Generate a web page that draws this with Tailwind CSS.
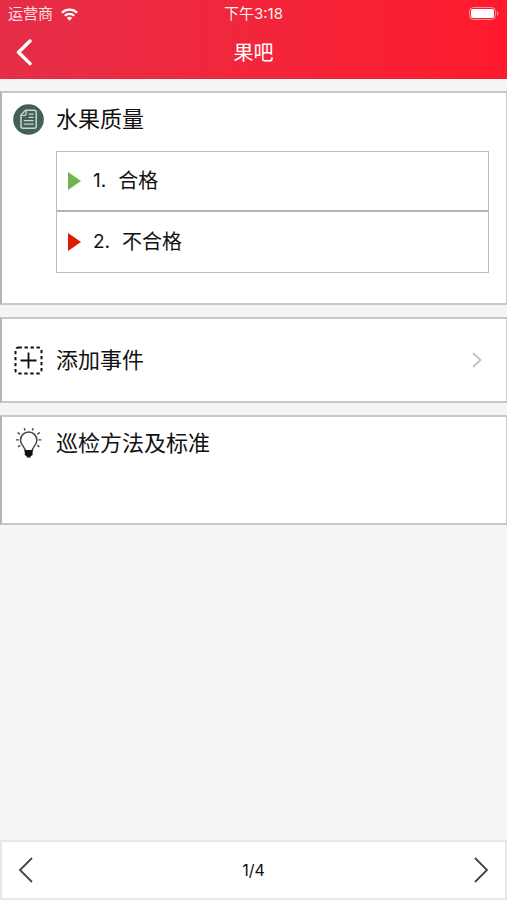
<!DOCTYPE html>
<html lang="zh-CN">
<head>
<meta charset="utf-8">
<meta name="viewport" content="width=device-width, initial-scale=1">
<title>果吧</title>
<script src="https://cdn.jsdelivr.net/npm/@tailwindcss/browser@4"></script>
</head>
<body class="flex min-h-screen flex-col bg-[#f5f5f5] font-['Inter','Noto_Sans_CJK_SC',sans-serif] text-[#111]">
<header class="bg-linear-to-r from-[#e52d47] to-[#ff1a2c] text-white">
  <div class="grid h-7 grid-cols-3 items-center px-2 text-[15px] leading-5">
    <div class="flex items-center gap-2 text-white/85">
      <span>运营商</span>
      <svg class="h-[13px] w-[17px]" viewBox="0 0 17 13" fill="none" stroke="#fff" stroke-width="2.3" aria-hidden="true">
        <path d="M.9 4.8a10.8 10.8 0 0 1 15.2 0M3.8 7.8a6.7 6.7 0 0 1 9.4 0"/>
        <path d="M8.5 12.8 5.8 10.1a3.8 3.8 0 0 1 5.4 0z" fill="#fff" stroke="none"/>
      </svg>
    </div>
    <div class="text-center text-white/95">下午3:18</div>
    <svg class="h-4 w-8 justify-self-end" viewBox="0 0 32 16" aria-hidden="true">
      <rect x="2.5" y="1.5" width="26" height="12" rx="4" fill="none" stroke="#fff" stroke-opacity=".5"/>
      <rect x="4" y="3" width="23" height="9" rx="2" fill="#fff"/>
      <path d="M30 5.3c1.9.6 1.9 3.8 0 4.4z" fill="#fff" fill-opacity=".5"/>
    </svg>
  </div>
  <div class="grid h-[51px] grid-cols-[48px_1fr_48px] items-center pb-0.5">
    <button type="button" aria-label="返回" class="flex h-11 items-center pl-4">
      <svg class="h-7 w-4" viewBox="0 0 16 28" fill="none" stroke="#fff" stroke-width="3.4" stroke-linecap="round" stroke-linejoin="round" aria-hidden="true"><path d="M14 2 2.5 13.3 14 24.6"/></svg>
    </button>
    <h1 class="text-center text-[20px] leading-7">果吧</h1>
  </div>
</header>

<main class="flex flex-1 flex-col gap-3 py-3">
  <section class="border-2 border-r border-[#c8c8c8] border-l-[#b4b4b4] bg-white pr-[17px] pb-[30px] pl-[11px]">
    <div class="flex h-[58px] items-center gap-3 pb-1.5">
      <svg class="size-[31px]" viewBox="0 0 31 31" fill="none" aria-hidden="true">
        <circle cx="15.5" cy="15.5" r="15.3" fill="#466059"/>
        <path d="M12.6 6.3h8.6a2 2 0 0 1 2 2v13.9a2 2 0 0 1-2 2H10a2 2 0 0 1-2-2V11z" stroke="#c3d9d1" stroke-width="1.5" stroke-linejoin="round"/>
        <path d="M13.2 6.5v3a2 2 0 0 1-2 2H8.3M15.8 10.2h4.8M15.8 13.4h4.8M10.8 16.7h9.8M10.8 20.2h9.8" stroke="#c3d9d1" stroke-width="1.2"/>
      </svg>
      <h2 class="text-[22px] leading-8">水果质量</h2>
    </div>
    <ol class="ml-[43px] border border-[#bdbdbd]">
      <li>
        <button type="button" class="flex h-15 w-full items-center border-b-2 border-[#b4b4b4] pl-[11px] text-[20px] leading-7">
          <svg class="h-[18px] w-[13px]" viewBox="0 0 13 18" aria-hidden="true"><path d="M0 0 13 9 0 18z" fill="#6eb54e"/></svg>
          <span class="ml-3 text-[19px]">1.</span><span class="ml-3">合格</span>
        </button>
      </li>
      <li>
        <button type="button" class="flex h-15 w-full items-center pl-[11px] text-[20px] leading-7">
          <svg class="h-[18px] w-[13px]" viewBox="0 0 13 18" aria-hidden="true"><path d="M0 0 13 9 0 18z" fill="#dc1c00"/></svg>
          <span class="ml-3 text-[19px]">2.</span><span class="ml-3">不合格</span>
        </button>
      </li>
    </ol>
  </section>

  <button type="button" class="flex h-[86px] items-center gap-3 border-2 border-r border-[#c8c8c8] border-l-[#b4b4b4] bg-white pr-6 pl-[11px] text-left">
    <svg class="size-[31px]" viewBox="0 0 31 31" fill="none" stroke="#111" aria-hidden="true">
      <rect x="2.5" y="2.5" width="26" height="26" rx="3" stroke-width="2" stroke-dasharray="3.4 2.6"/>
      <path d="M7.5 15.5h16M15.5 7.5v16" stroke-width="1.8"/>
    </svg>
    <span class="flex-1 text-[22px] leading-8">添加事件</span>
    <svg class="h-4 w-[10px]" viewBox="0 0 10 16" fill="none" stroke="#c4c4c4" stroke-width="2" aria-hidden="true"><path d="m1 1 7.5 7L1 15"/></svg>
  </button>

  <section class="h-[110px] border-2 border-r border-[#c8c8c8] border-l-[#b4b4b4] bg-white pl-[11px]">
    <div class="flex h-[58px] items-center gap-3 pb-1.5">
      <svg class="size-[31px]" viewBox="0 0 31 31" fill="none" stroke="#444" aria-hidden="true">
        <path d="M12.2 23c0-4.2-4.7-5.7-4.7-10.8a8.2 8.2 0 0 1 16.4 0c0 5.1-4.7 6.6-4.7 10.8z" stroke-width="1.5"/>
        <path d="M11.8 22h7.8v5l-2 1.2v1.4h-3.8v-1.4l-2-1.2z" fill="#111" stroke="none"/>
        <path d="M11.2.2l.9 2.2M20.2.2l-.9 2.2M4.6 4.6l2.5 1.6M26.8 4.6l-2.5 1.6M3 11.9h2.9M25.5 11.9h2.9M5 18.8l2.2-1.5M26.4 18.8l-2.2-1.5" stroke-width="1.4"/>
      </svg>
      <h2 class="text-[22px] leading-8">巡检方法及标准</h2>
    </div>
  </section>
</main>

<nav aria-label="分页" class="flex h-15 items-center justify-between border-2 border-[#e5e8e8] bg-white px-4">
  <button type="button" aria-label="上一页" class="flex h-12 items-center">
    <svg class="h-[26px] w-4" viewBox="0 0 16 26" fill="none" stroke="#444" stroke-width="1.8" aria-hidden="true"><path d="M14 1 2 13l12 12"/></svg>
  </button>
  <span class="text-[16px] leading-6">1/4</span>
  <button type="button" aria-label="下一页" class="flex h-12 items-center">
    <svg class="h-[26px] w-4" viewBox="0 0 16 26" fill="none" stroke="#444" stroke-width="1.8" aria-hidden="true"><path d="m2 1 12 12L2 25"/></svg>
  </button>
</nav>
</body>
</html>
